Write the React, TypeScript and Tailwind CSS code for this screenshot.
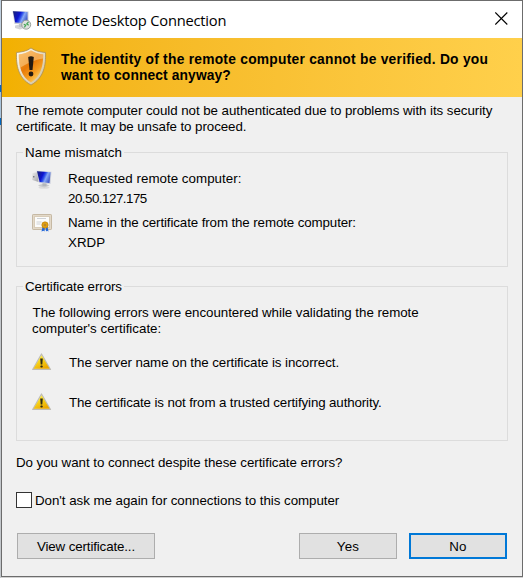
import type { ReactNode } from "react";

function Gradients() {
  return (
    <defs>
      <linearGradient id="screen" x1="0" y1="0.2" x2="1" y2="0.6">
        <stop offset="0" stopColor="#18207e" />
        <stop offset="0.4" stopColor="#0c14d0" />
        <stop offset="0.55" stopColor="#2e50ea" />
        <stop offset="0.7" stopColor="#86a8f4" />
        <stop offset="1" stopColor="#3c55c8" />
      </linearGradient>
      <linearGradient id="metal" x1="0" y1="0" x2="1" y2="1">
        <stop offset="0" stopColor="#ececec" />
        <stop offset="1" stopColor="#a2a3a7" />
      </linearGradient>
    </defs>
  );
}

function RemoteDesktopIcon() {
  return (
    <svg viewBox="0 0 20 20" className="size-5" aria-hidden="true">
      <Gradients />
      <path d="M3 15.500 10 14l5 3-7 2.500-5-1.500Z" fill="#d2d4d8" />
      <path d="M7 12h5v5H7z" fill="#bfc2c7" />
      <path d="M0.500 1 16.500 1.500 16.500 14.500 2.500 14Z" fill="#c9ccd6" />
      <path d="M1 1.300 15.500 2 15.500 13.500 3.200 12.500Z" fill="url(#screen)" />
      <circle cx="14.200" cy="14.700" r="4.500" fill="#dde0de" stroke="#929a95" strokeWidth="0.900" />
      <path d="m11.800 14.300 1.900 1-1.300 2M16.700 15.200l-1.900-1.300 1.700-2" fill="none" stroke="#3fa552" strokeWidth="1.200" />
    </svg>
  );
}

function ComputerIcon() {
  return (
    <svg viewBox="0 0 20 20" className="size-5" aria-hidden="true">
      <Gradients />
      <ellipse cx="12" cy="18.500" rx="5.500" ry="1.300" fill="#dcdcdc" />
      <path d="M0.300 4 6.500 3V13l-6.200-2z" fill="url(#metal)" />
      <path d="M1 7h1.500v1.500H1z" fill="#7d8086" />
      <path d="m6.500 16 6-1.500 5 2-5 2-6-1.500Z" fill="#c7c9cc" />
      <path d="M10.500 13h4v4h-4z" fill="#b3b6bb" />
      <path d="M4.500 1.800 19.500 2.800 18.500 15 7 14z" fill="#ccd0dc" />
      <path d="M5 2.200 18.600 3.300 17.500 14 7.600 12.900z" fill="url(#screen)" />
    </svg>
  );
}

function Shield() {
  return (
    <svg viewBox="0 0 32 39" className="h-[39px] w-8" aria-hidden="true">
      <defs>
        <linearGradient id="shield" x1="0" y1="0" x2="0.7" y2="1">
          <stop offset="0" stopColor="#f7a83c" />
          <stop offset="0.5" stopColor="#e87a08" />
          <stop offset="0.75" stopColor="#f59c20" />
          <stop offset="1" stopColor="#ffd468" />
        </linearGradient>
        <linearGradient id="rim" x1="0" y1="0" x2="1" y2="1">
          <stop offset="0" stopColor="#fffdf2" />
          <stop offset="1" stopColor="#cfbd96" />
        </linearGradient>
      </defs>
      <path d="M16 1c4 3 9 4 14.500 4.500C31 18 29 31 16 38 3 31 1 18 1.500 5.500 7 5 12 4 16 1Z" fill="url(#rim)" stroke="#a98d54" strokeWidth="0.800" />
      <path d="M16 3.500c4 2.500 8 3.500 12.200 4C28.200 19 26 29.500 16 35.500 6 29.500 3.800 19 3.800 7.500 8 7 12 6 16 3.500Z" fill="url(#shield)" />
      <path d="M16 3.500c4 2.500 8 3.500 12.200 4v4C20 12.500 11 17 4.800 21 4 16.500 3.800 12 3.800 7.500 8 7 12 6 16 3.500Z" fill="#ffe2ad" opacity="0.450" />
      <path d="M13.200 10q2.800-1.500 5.600 0L17.500 23h-3Z" fill="#241a12" />
      <circle cx="16" cy="27" r="2.400" fill="#241a12" />
    </svg>
  );
}

function Certificate() {
  return (
    <svg viewBox="0 0 20 18" className="h-[18px] w-5" aria-hidden="true">
      <rect x="0.500" y="0.500" width="19" height="15" rx="0.700" fill="#d8ccb8" stroke="#c6b9a4" />
      <rect x="1.500" y="1.500" width="17" height="13" fill="none" stroke="#eee6da" strokeDasharray="1 1" />
      <rect x="3" y="3" width="14" height="10" fill="#fcfcfb" />
      <path d="M5 4.500h9M4.500 8h5M4.500 10h4" stroke="#c3c6cd" strokeWidth="0.800" />
      <path d="m10.500 13-1 4.500 2-.8 1 .8.5-4M13.500 13l.5 4.500 1-.8 1.500.8-1-5" fill="#2468d8" />
      <circle cx="13" cy="11" r="3.200" fill="#e0a010" stroke="#b87908" strokeWidth="0.600" />
      <circle cx="13" cy="11" r="1.200" fill="#b98530" />
    </svg>
  );
}

function Warning() {
  return (
    <svg viewBox="0 0 20 18" className="h-[18px] w-5" aria-hidden="true">
      <defs>
        <linearGradient id="warn" x1="0" y1="0" x2="0.600" y2="1">
          <stop offset="0" stopColor="#fff46a" />
          <stop offset="0.500" stopColor="#f7d51c" />
          <stop offset="1" stopColor="#eca800" />
        </linearGradient>
      </defs>
      <path d="M9.500 1 18.500 16.500H.7Z" fill="#d9d7d1" stroke="#bebcb6" strokeWidth="1.200" strokeLinejoin="round" />
      <path d="M9.500 2.200 17.700 15.700H1.500Z" fill="url(#warn)" />
      <path d="M8.200 5.500h2.600l-.5 6H8.700Z" fill="#2f2b17" />
      <rect x="8.400" y="12.500" width="2.300" height="2" rx="0.800" fill="#2f2b17" />
    </svg>
  );
}

function Group({ title, className, children }: { title: ReactNode; className: string; children: ReactNode }) {
  return (
    <section className={`relative border border-[#dcdcdc] ${className}`}>
      <h2 className="absolute -top-2 left-[6px] bg-[#f0f0f0] px-[2px] leading-4">{title}</h2>
      {children}
    </section>
  );
}

export default function App() {
  return (
    <div className="flex h-[578px] w-[523px] bg-[#d2d2d2] font-['Liberation_Sans',Arial,sans-serif] text-[13.333px] leading-4 whitespace-nowrap text-black">
      <div className="flex w-px flex-col bg-[#c3c7cb]">
        <div className="h-[85px] bg-[#c0d0df]" />
        <div className="h-[7px] bg-[#0067c0]" />
        <div className="h-[26px] bg-[#a9c4dc]" />
        <div className="h-[7px] bg-[#0067c0]" />
      </div>
      <main className="flex h-[577px] w-[522px] flex-col border border-[#6c6c6c] bg-[#f0f0f0]">
        <header className="flex h-[37px] items-center bg-white pr-[14px] pl-[10px]">
          <RemoteDesktopIcon />
          <h1 className="ml-1 font-['Open_Sans','Noto_Sans',sans-serif] text-[14.7px] leading-5 tracking-[-0.22px]">Remote Desktop Connection</h1>
          <button className="mb-0.5 ml-auto" aria-label="Close">
            <svg viewBox="0 0 13 13" className="size-[13px]"><path d="m.3.5 12 12m0-12-12 12" stroke="#000" strokeWidth="1.100" /></svg>
          </button>
        </header>
        <div className="flex h-[59px] bg-linear-to-r from-[#f2b000] to-[#ffd04b] pt-[9px] pl-[13px] font-bold">
          <Shield />
          <p className="ml-[14px] pt-[5px] text-[13.8px] leading-4">
            <span className="tracking-[0.25px]">The identity of the remote computer cannot be verified. Do you</span>
            <br />
            <span className="tracking-[0.12px]">want to connect anyway?</span>
          </p>
        </div>
        <p className="mt-[6px] pl-[14px]">
          <span className="tracking-[-0.056px]">The remote computer could not be authenticated due to problems with its security</span>
          <br />
          <span className="tracking-[-0.073px]">certificate. It may be unsafe to proceed.</span>
        </p>
        <Group title={<span className="tracking-[0.06px]">Name mismatch</span>} className="mx-[14px] mt-[17px] h-[115px] w-[492px] pt-4 pl-[15px]">
          <div className="flex">
            <ComputerIcon />
            <p className="ml-4 leading-5"><span className="tracking-[0.03px]">Requested remote computer:</span><br /><span className="tracking-[-0.5px]">20.50.127.175</span></p>
          </div>
          <div className="mt-1 flex">
            <div className="pt-px"><Certificate /></div>
            <p className="ml-4 leading-5"><span className="tracking-[-0.11px]">Name in the certificate from the remote computer:</span><br />XRDP</p>
          </div>
        </Group>
        <Group title={<span className="tracking-[-0.09px]">Certificate errors</span>} className="mx-[14px] mt-[19px] h-[155px] w-[492px] pt-[18px] pl-[15px]">
          <p><span className="ml-[0.6px] tracking-[-0.045px]">The following errors were encountered while validating the remote</span><br />computer's certificate:</p>
          <div className="mt-[15px] flex h-5 items-center gap-[17px]"><Warning /><span className="pt-0.5 tracking-[-0.085px]">The server name on the certificate is incorrect.</span></div>
          <div className="mt-5 flex h-5 items-center gap-[17px]"><Warning /><span className="pt-0.5 tracking-[-0.12px]">The certificate is not from a trusted certifying authority.</span></div>
        </Group>
        <p className="mt-[14px] pl-[14px] tracking-[-0.045px]">Do you want to connect despite these certificate errors?</p>
        <label className="mt-[21px] flex h-4 items-center pl-[14px]">
          <input type="checkbox" className="size-4 appearance-none border border-[#333] bg-white" />
          <span className="ml-[3px] pt-0.5 tracking-[-0.04px]">Don't ask me again for connections to this computer</span>
        </label>
        <footer className="mt-[25px] flex h-[26px] px-[15px]">
          <button className="w-[138px] border border-[#adadad] bg-[#e1e1e1] pt-px tracking-[-0.13px]">View certificate...</button>
          <button className="ml-auto w-[98px] border border-[#adadad] bg-[#e1e1e1] pt-px tracking-[0.3px]">Yes</button>
          <button className="ml-3 w-[98px] border-2 border-[#0078d7] bg-[#e1e1e1] pt-px tracking-[0.3px]">No</button>
        </footer>
      </main>
    </div>
  );
}
